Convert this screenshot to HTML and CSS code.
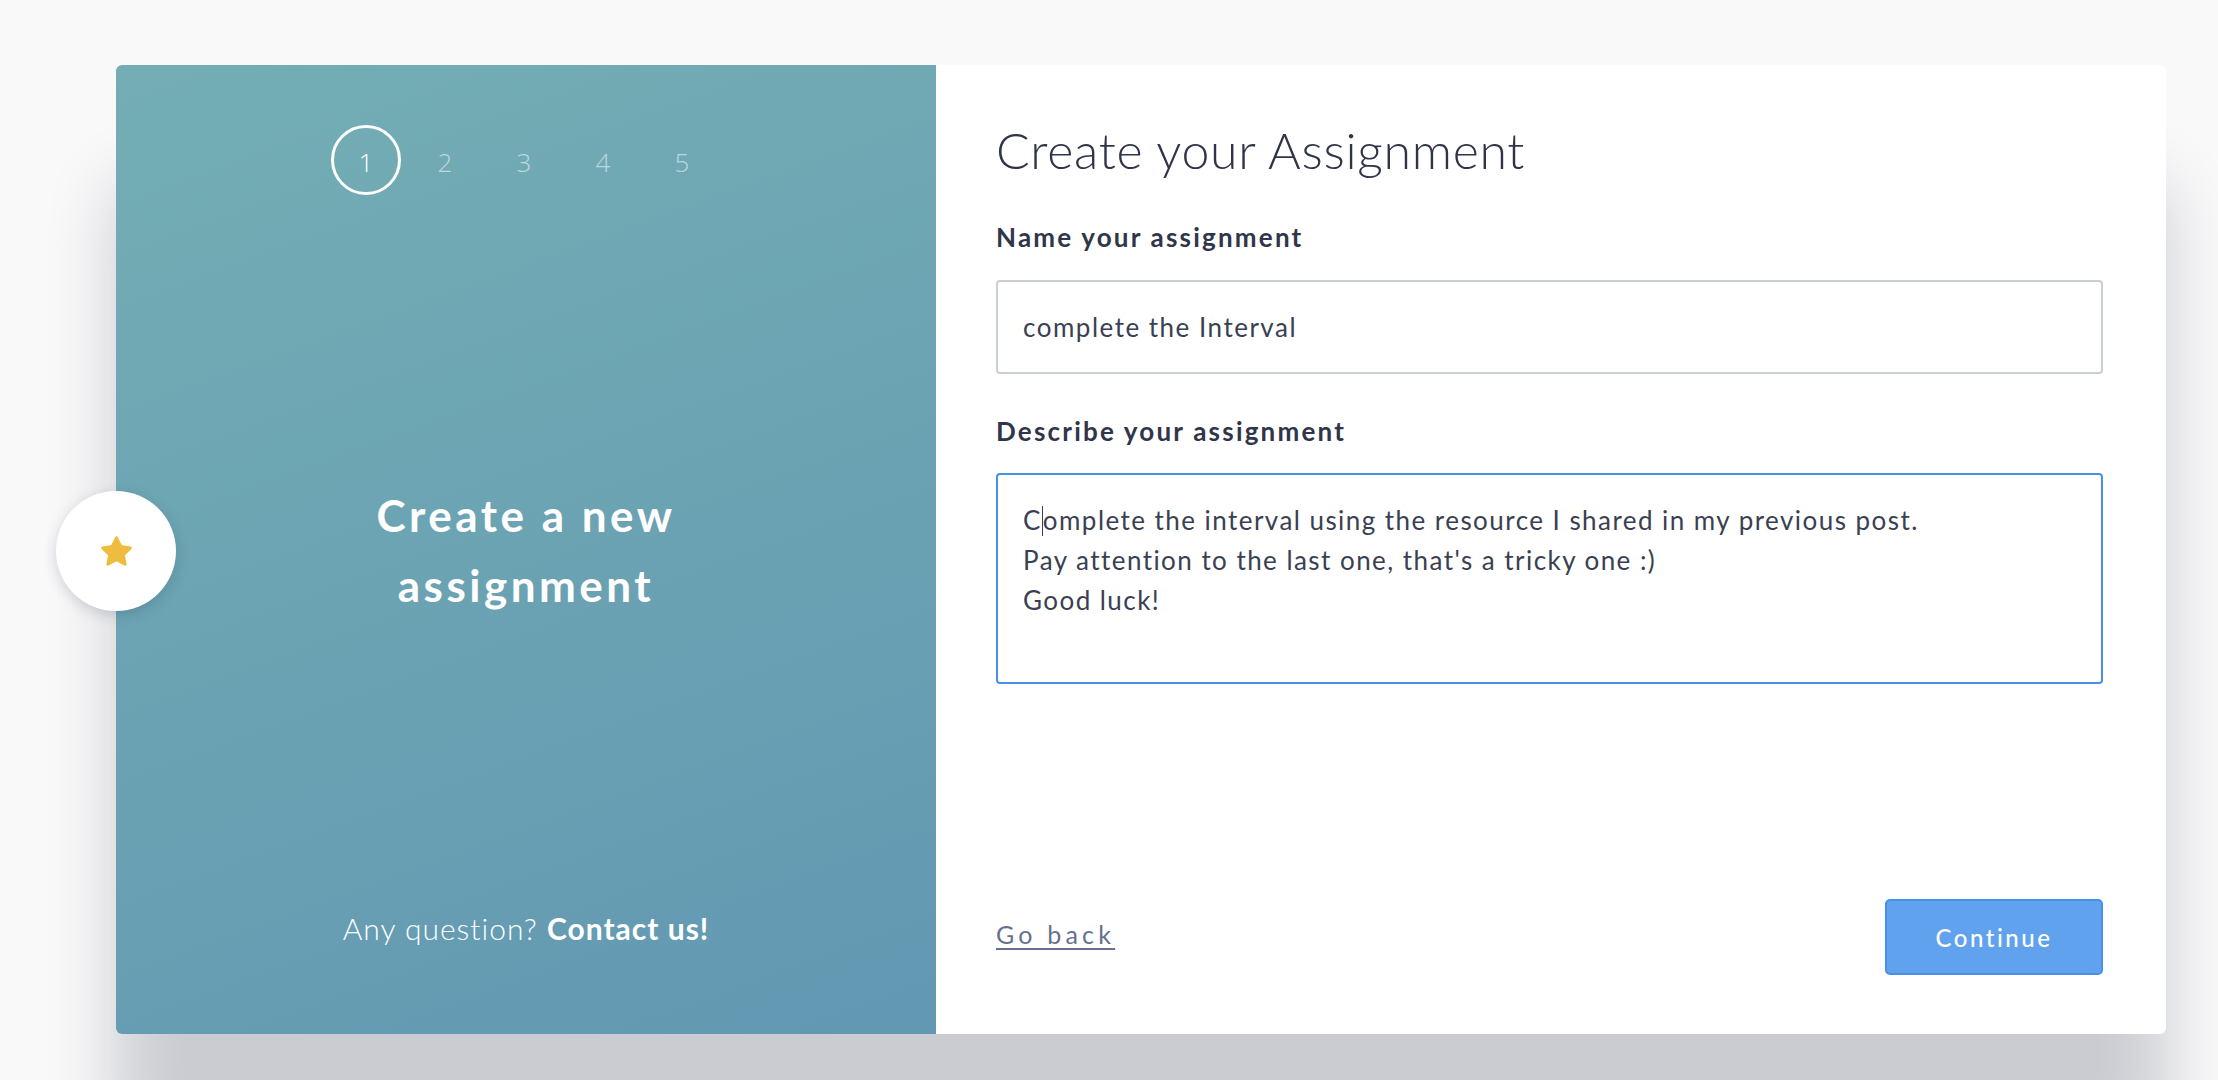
FILE: index.html
```html
<!DOCTYPE html>
<html lang="en">
<head>
<meta charset="utf-8">
<title>Create your Assignment</title>
<link rel="stylesheet" href="styles.css">
</head>
<body>
<div class="page">
  <div class="card">
    <button class="fav" type="button" aria-label="Favourite">
      <svg class="star" viewBox="0 0 24 24" width="35" height="35"><path d="M12 2.6l2.95 5.98 6.6.96-4.78 4.65 1.13 6.57L12 17.66l-5.9 3.1 1.13-6.57-4.78-4.65 6.6-.96z" fill="#f0bc3f" stroke="#f0bc3f" stroke-width="2" stroke-linejoin="round"/></svg>
    </button>
    <aside class="side">
      <ol class="steps">
        <li class="step active">1</li>
        <li class="step">2</li>
        <li class="step">3</li>
        <li class="step">4</li>
        <li class="step">5</li>
      </ol>
      <h2 class="side-title">Create a new<br>assignment</h2>
      <p class="side-foot">Any question? <strong>Contact us!</strong></p>
    </aside>
    <main class="main">
      <h1 class="title">Create your Assignment</h1>
      <label class="label label-first">Name your assignment</label>
      <div class="input">complete the Interval</div>
      <label class="label">Describe your assignment</label>
      <div class="textarea">C<span class="caret"></span>omplete the interval using the resource I shared in my previous post.<br>Pay attention to the last one, that's a tricky one :)<br>Good luck!</div>
      <div class="actions">
        <a class="back" href="#">Go back</a>
        <button class="continue" type="button">Continue</button>
      </div>
    </main>
  </div>
</div>
</body>
</html>
```

FILE: styles.css
```css
* { box-sizing: border-box; }

html, body {
  margin: 0;
  height: 100%;
  overflow: hidden;
}

body {
  background: #f9f9fa;
  font-family: Lato, "Open Sans", "Liberation Sans", sans-serif;
  color: #2f3447;
}

.page {
  padding: 65px 52px 0 116px;
}

.card {
  position: relative;
  display: flex;
  height: 969px;
  border-radius: 6px;
  background: #ffffff;
  box-shadow: 0 120px 70px rgba(19, 24, 45, 0.2);
}

.fav {
  position: absolute;
  left: -60px;
  top: 426px;
  width: 120px;
  height: 120px;
  border: 0;
  border-radius: 50%;
  background: #ffffff;
  box-shadow: 0 4px 14px rgba(30, 40, 60, 0.18);
  display: flex;
  align-items: center;
  justify-content: center;
  padding: 0;
  z-index: 2;
}

.star { display: block; }

.side {
  width: 820px;
  flex: none;
  border-radius: 6px 0 0 6px;
  background: linear-gradient(160deg, #74aeb4 0%, #6ba3b3 50%, #6298b2 100%);
  display: grid;
  grid-template-rows: 1fr auto 1fr;
  justify-items: center;
  color: #ffffff;
}

.steps {
  list-style: none;
  margin: 60px 4px 0 0;
  padding: 0;
  display: flex;
  gap: 9px;
  align-self: start;
}

.step {
  width: 70px;
  height: 70px;
  display: flex;
  align-items: center;
  justify-content: center;
  font-family: "Open Sans", Lato, sans-serif;
  font-weight: 300;
  font-size: 26px;
  padding-top: 3px;
  color: rgba(255, 255, 255, 0.55);
  border-radius: 50%;
  border: 3px solid transparent;
}

.step.active {
  color: #ffffff;
  border-color: #ffffff;
}

.side-title {
  margin: 0;
  font-size: 44px;
  line-height: 70px;
  font-weight: 700;
  letter-spacing: 3.5px;
  text-align: center;
}

.side-foot {
  margin: 0 0 88px;
  align-self: end;
  font-size: 30px;
  line-height: 36px;
  font-weight: 300;
  letter-spacing: 1px;
}

.side-foot strong { font-weight: 700; }

.main {
  flex: 1;
  display: flex;
  flex-direction: column;
  padding: 55px 63px 59px 60px;
}

.title {
  margin: 0;
  font-size: 50px;
  line-height: 60px;
  font-weight: 300;
  letter-spacing: 0.7px;
  color: #2f3447;
}

.label {
  display: block;
  margin-top: 41px;
  font-size: 26px;
  line-height: 32px;
  font-weight: 700;
  letter-spacing: 2.2px;
  color: #30354a;
}

.input {
  margin-top: 27px;
  height: 94px;
  border: 2px solid #c8d0d5;
  border-radius: 4px;
  padding: 0 25px;
  display: flex;
  align-items: center;
  font-size: 26px;
  letter-spacing: 1.5px;
  color: #3a3f52;
}

.textarea {
  margin-top: 26px;
  height: 211px;
  border: 2px solid #4a8fe7;
  border-radius: 4px;
  padding: 25px 25px;
  font-size: 26px;
  line-height: 40px;
  letter-spacing: 1.45px;
  color: #3a3f52;
}

.caret {
  display: inline-block;
  width: 0;
  height: 30px;
  border-left: 1.5px solid #3a3f52;
  vertical-align: -6px;
}

.actions {
  margin-top: auto;
  display: flex;
  align-items: center;
  justify-content: space-between;
}

.back {
  padding-bottom: 6px;
  font-size: 25px;
  letter-spacing: 4.2px;
  color: #66708f;
  text-decoration: underline;
  text-decoration-thickness: 2px;
  text-underline-offset: 4px;
}

.continue {
  width: 218px;
  height: 76px;
  border: 2px solid #4a8fe7;
  border-radius: 5px;
  background: #61a2ef;
  color: #ffffff;
  font-family: Lato, sans-serif;
  font-size: 24px;
  letter-spacing: 2.5px;
  font-weight: 500;
}
```
